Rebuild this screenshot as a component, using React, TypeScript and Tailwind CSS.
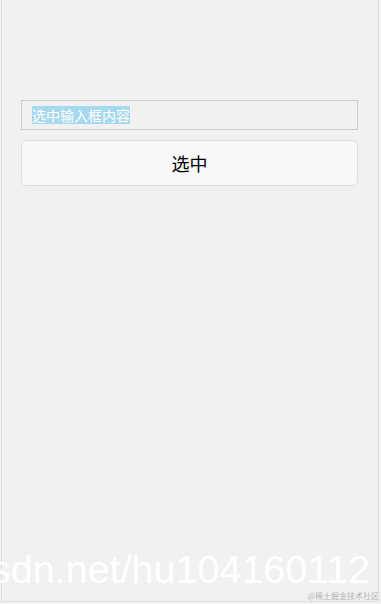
import React from "react";

export default function App() {
  const cjk = { fontFamily: '"Microsoft YaHei", "Noto Sans CJK SC", "Noto Sans", sans-serif' };
  return (
    <div className="relative w-[381px] h-[604px] overflow-hidden bg-[#f1f1f1]">
      <div className="ml-[1px] w-[378px] h-[602px] border-l border-r border-b border-[#dedede] bg-[#f1f1f1] pl-[19px] pt-[100px]" style={cjk}>
        <div className="w-[337px] h-[30px] border border-[#cccccc] bg-[#f1f1f1] flex items-center pl-[10px]">
          <span className="inline-block h-[18px] leading-[18px] text-[14px] bg-[#a6d8ee] text-white">选中输入框内容</span>
        </div>
        <button className="mt-[10px] w-[337px] h-[46px] rounded-[5px] border border-[#dddddd] bg-[#f8f8f8] text-[18px] text-black flex items-center justify-center">
          选中
        </button>
      </div>
      <div
        className="absolute left-[-9px] top-[546px] text-[39.5px] leading-[46px] text-white whitespace-nowrap"
        style={{ fontFamily: '"Liberation Sans", Arial, sans-serif' }}
      >
        sdn.net/hu104160112
      </div>
      <div className="absolute right-[2px] top-[590px] text-[8px] leading-[12px] text-[#b4b4b4] whitespace-nowrap" style={cjk}>
        @稀土掘金技术社区
      </div>
    </div>
  );
}
